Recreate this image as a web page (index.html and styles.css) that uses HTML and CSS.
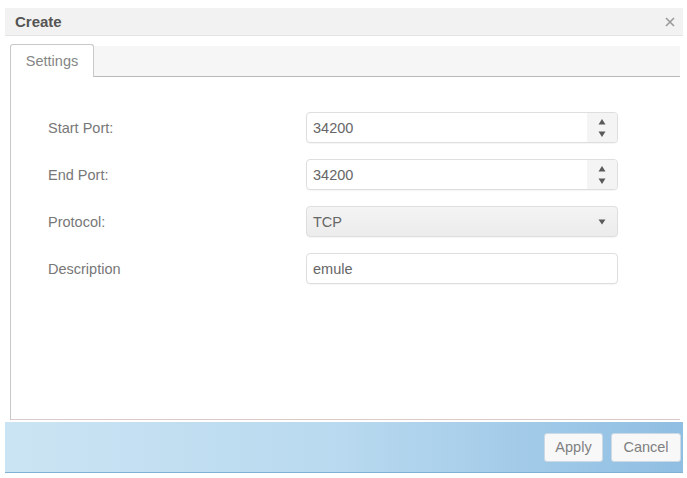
FILE: index.html
```html
<!DOCTYPE html>
<html>
<head>
<meta charset="utf-8">
<link rel="stylesheet" href="styles.css">
</head>
<body>
<div class="dialog">
  <div class="titlebar">
    <span class="title">Create</span>
    <span class="close"><svg width="10" height="10" viewBox="0 0 10 10"><path d="M1 1L9 9M9 1L1 9" stroke="#9a9a9a" stroke-width="1.6" fill="none"/></svg></span>
  </div>
  <div class="main">
    <div class="tabs">
      <div class="tab">Settings</div>
      <div class="tab-rest"></div>
    </div>
    <div class="panel">
      <div class="form">
        <div class="row">
          <div class="label">Start Port:</div>
          <div class="field spin">
            <span class="value">34200</span>
            <span class="spinner"><svg width="8" height="20" viewBox="0 0 8 20"><path d="M4 1L7.5 6.5H0.5Z M4 19L7.5 13.5H0.5Z" fill="#5a5a5a"/></svg></span>
          </div>
        </div>
        <div class="row">
          <div class="label">End Port:</div>
          <div class="field spin">
            <span class="value">34200</span>
            <span class="spinner"><svg width="8" height="20" viewBox="0 0 8 20"><path d="M4 1L7.5 6.5H0.5Z M4 19L7.5 13.5H0.5Z" fill="#5a5a5a"/></svg></span>
          </div>
        </div>
        <div class="row">
          <div class="label">Protocol:</div>
          <div class="field select">
            <span class="value">TCP</span>
            <span class="caret"><svg width="8" height="6" viewBox="0 0 8 6"><path d="M0.5 0.5H7.5L4 5.5Z" fill="#5a5a5a"/></svg></span>
          </div>
        </div>
        <div class="row">
          <div class="label">Description</div>
          <div class="field">
            <span class="value">emule</span>
          </div>
        </div>
      </div>
    </div>
  </div>
  <div class="footer">
    <button class="btn apply">Apply</button>
    <button class="btn cancel">Cancel</button>
  </div>
</div>
</body>
</html>
```
FILE: styles.css
```css
html, body {
  margin: 0;
  padding: 0;
  background: #ffffff;
}
body {
  padding: 8px 4px 5px 5px;
  font-family: "Liberation Sans", Arial, sans-serif;
}
.dialog {
  width: 678px;
  display: flex;
  flex-direction: column;
}
.titlebar {
  height: 27px;
  background: #f2f2f2;
  border-bottom: 1px solid #e4e4e4;
  display: flex;
  align-items: center;
  justify-content: space-between;
  padding: 0 8px 0 10px;
}
.title {
  font-size: 15px;
  font-weight: bold;
  color: #555;
}
.close {
  display: flex;
  align-items: center;
}
.main {
  padding: 8px 3px 0 5px;
}
.tabs {
  display: flex;
  height: 33px;
}
.tab {
  width: 82px;
  border: 1px solid #c8c8c8;
  border-bottom: none;
  border-radius: 3px 3px 0 0;
  background: #ffffff;
  font-size: 14.5px;
  color: #858585;
  display: flex;
  align-items: center;
  justify-content: center;
}
.tab-rest {
  flex: 1;
  background: #f6f6f6;
  border-bottom: 1px solid #b9b9b9;
  margin-top: 2px;
}
.panel {
  height: 342px;
  border-left: 1px solid #c8c8c8;
  border-bottom: 1px solid #dcc9c9;
  background: #ffffff;
}
.form {
  padding: 35px 0 0 37px;
  display: flex;
  flex-direction: column;
  gap: 16px;
}
.row {
  display: flex;
  align-items: center;
  height: 31px;
}
.label {
  width: 258px;
  font-size: 14.5px;
  color: #777;
}
.field {
  width: 310px;
  height: 29px;
  border: 1px solid #dedede;
  border-radius: 4px;
  background: #ffffff;
  display: flex;
  align-items: center;
  box-shadow: 0 1px 1px rgba(0,0,0,0.04);
}
.value {
  flex: 1;
  padding-left: 6px;
  font-size: 14.5px;
  color: #666;
}
.spinner {
  width: 30px;
  height: 100%;
  background: #f4f4f4;
  border-radius: 0 4px 4px 0;
  display: flex;
  align-items: center;
  justify-content: center;
}
.select {
  background: linear-gradient(#f4f4f4, #ececec);
}
.caret {
  width: 30px;
  display: flex;
  justify-content: center;
}
.footer {
  margin-top: 2px;
  height: 50px;
  background: linear-gradient(90deg, #cbe4f3 0%, #b8d9ef 50%, #8fbee2 100%);
  border-bottom: 1px solid #7fb0d6;
  display: flex;
  align-items: center;
  justify-content: flex-end;
  gap: 8px;
  padding-right: 2px;
}
.btn {
  height: 29px;
  border: 1px solid #cdd9e4;
  border-radius: 3px;
  background: #f8f8f8;
  font-family: "Liberation Sans", Arial, sans-serif;
  font-size: 14.5px;
  color: #808080;
  padding: 0;
}
.apply { width: 59px; }
.cancel { width: 70px; }
```
